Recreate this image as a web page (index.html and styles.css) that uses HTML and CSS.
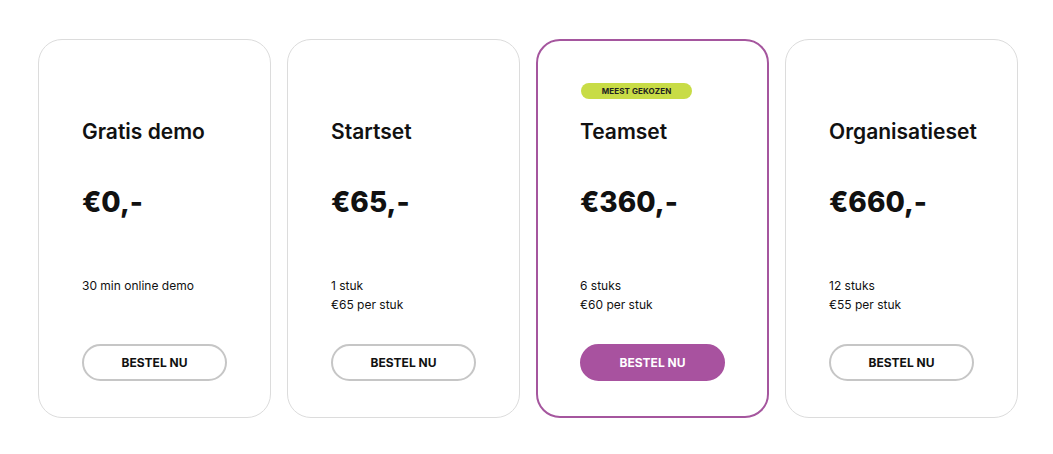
FILE: index.html
```html
<!DOCTYPE html>
<html lang="nl">
<head>
<meta charset="utf-8">
<link rel="stylesheet" href="styles.css">
</head>
<body>
<div class="plans">
  <div class="card">
    <div class="badge-row"></div>
    <h2 class="title">Gratis demo</h2>
    <div class="price">€0,-</div>
    <div class="desc"><p>30 min online demo</p></div>
    <a class="btn">BESTEL NU</a>
  </div>
  <div class="card">
    <div class="badge-row"></div>
    <h2 class="title">Startset</h2>
    <div class="price">€65,-</div>
    <div class="desc"><p>1 stuk</p><p>€65 per stuk</p></div>
    <a class="btn">BESTEL NU</a>
  </div>
  <div class="card featured">
    <div class="badge-row"><span class="badge">MEEST GEKOZEN</span></div>
    <h2 class="title">Teamset</h2>
    <div class="price">€360,-</div>
    <div class="desc"><p>6 stuks</p><p>€60 per stuk</p></div>
    <a class="btn btn-primary">BESTEL NU</a>
  </div>
  <div class="card">
    <div class="badge-row"></div>
    <h2 class="title">Organisatieset</h2>
    <div class="price">€660,-</div>
    <div class="desc"><p>12 stuks</p><p>€55 per stuk</p></div>
    <a class="btn">BESTEL NU</a>
  </div>
</div>
</body>
</html>
```
FILE: styles.css
```css
* { box-sizing: border-box; }
html, body { margin: 0; padding: 0; background: #fff; }
body {
  font-family: Inter, "Noto Sans", sans-serif;
  color: #111;
}
.plans {
  display: grid;
  grid-template-columns: repeat(4, 233px);
  gap: 16px;
  padding: 39px 38px 0;
}
.card {
  height: 379px;
  border: 1px solid #dcdcdc;
  border-radius: 24px;
  padding: 43px 43px 0;
  display: flex;
  flex-direction: column;
}
.card.featured {
  border: 2px solid #a5569e;
  padding: 42px 42px 0;
}
.badge-row { height: 16px; display: flex; }
.badge {
  display: inline-flex;
  align-items: center;
  justify-content: center;
  width: 111px;
  height: 16px;
  margin-left: 1px;
  border-radius: 8px;
  background: #c8dc46;
  font-size: 8px;
  font-weight: 700;
  color: #222;
  letter-spacing: 0.1px;
}
.title {
  margin: 18px 0 0;
  font-size: 21px;
  font-weight: 600;
  line-height: 30px;
  color: #111;
}
.price {
  margin-top: 35px;
  font-size: 28px;
  font-weight: 800;
  line-height: 40px;
  color: #111;
}
.desc {
  margin-top: 54px;
  height: 58px;
  font-size: 12px;
  line-height: 19px;
}
.desc p { margin: 0; }
.btn {
  margin-top: 10px;
  width: 145px;
  height: 37px;
  border: 2px solid #c6c6c6;
  border-radius: 19px;
  display: flex;
  align-items: center;
  justify-content: center;
  font-size: 12px;
  font-weight: 700;
  color: #111;
}
.btn-primary {
  background: #a8529f;
  border-color: #a8529f;
  color: #fff;
}
```
